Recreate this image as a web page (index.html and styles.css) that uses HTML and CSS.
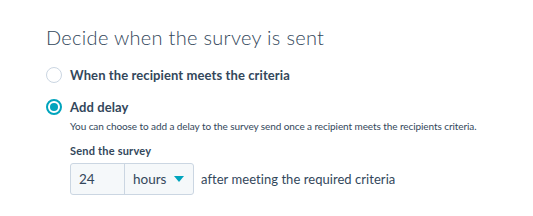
FILE: index.html
```html
<!DOCTYPE html>
<html lang="en">
<head>
  <meta charset="UTF-8"/>
  <title>Survey timing</title>
  <link rel="stylesheet" href="styles.css">
</head>
<body>
  <div class="panel">
    <h2 class="panel-title">Decide when the survey is sent</h2>

    <label class="option">
      <span class="radio"></span>
      <span class="option-label">When the recipient meets the criteria</span>
    </label>

    <label class="option">
      <span class="radio checked"></span>
      <span class="option-label">Add delay</span>
    </label>

    <div class="delay">
      <p class="help">You can choose to add a delay to the survey send once a recipient meets the recipients criteria.</p>
      <div class="field-label">Send the survey</div>
      <div class="delay-row">
        <div class="combo">
          <div class="combo-num">24</div>
          <div class="combo-unit">
            hours
            <svg width="10" height="6" viewBox="0 0 10 6"><path d="M0 0h10L5 6z" fill="#00a4bd"/></svg>
          </div>
        </div>
        <span class="after">after meeting the required criteria</span>
      </div>
    </div>
  </div>
</body>
</html>
```

FILE: styles.css
```css
/* RESET */
* {
  margin: 0;
  padding: 0;
  box-sizing: border-box;
}

body {
  background: #fff;
  color: #33475b;
  font-family: Lato, 'Liberation Sans', sans-serif;
}

/* PANEL */
.panel {
  padding: 25px 0 0 46px;
}

.panel-title {
  font-size: 20px;
  font-weight: 300;
  line-height: 24px;
  letter-spacing: 0.3px;
  margin-bottom: 18px;
}

/* RADIO OPTIONS */
.option {
  display: flex;
  align-items: center;
  gap: 8px;
  height: 16px;
  margin-bottom: 16px;
}

.radio {
  width: 16px;
  height: 16px;
  border: 1px solid #cbd6e2;
  border-radius: 50%;
  background: #fff;
  position: relative;
}

.radio.checked {
  border: 2px solid #00a4bd;
}

.radio.checked::after {
  content: "";
  position: absolute;
  left: 2px;
  top: 2px;
  width: 8px;
  height: 8px;
  border-radius: 50%;
  background: #00a4bd;
}

.option-label {
  font-size: 13px;
  font-weight: 700;
  letter-spacing: 0.1px;
}

/* DELAY SETTINGS */
.delay {
  padding-left: 24px;
  margin-top: -12px;
}

.help {
  font-size: 10px;
  line-height: 14px;
  letter-spacing: -0.08px;
  margin-bottom: 11px;
}

.field-label {
  font-size: 11px;
  font-weight: 700;
  line-height: 14px;
  letter-spacing: 0.2px;
  margin-bottom: 5px;
}

.delay-row {
  display: flex;
  align-items: center;
  gap: 7px;
}

.combo {
  display: flex;
  width: 124px;
  height: 32px;
  border: 1px solid #cbd6e2;
  border-radius: 3px;
  background: #f5f8fa;
  font-size: 13.5px;
}

.combo-num {
  width: 54px;
  padding-left: 8px;
  display: flex;
  align-items: center;
  border-right: 1px solid #cbd6e2;
}

.combo-unit {
  flex: 1;
  display: flex;
  align-items: center;
  gap: 8px;
  padding-left: 8px;
}

.after {
  font-size: 13px;
  letter-spacing: 0.05px;
}
```
